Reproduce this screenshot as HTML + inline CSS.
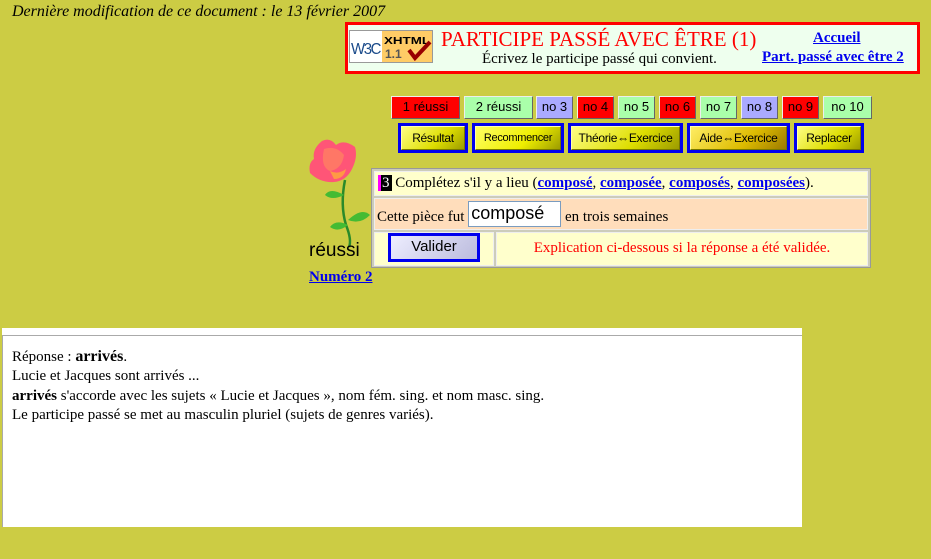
<!DOCTYPE html>
<html><head><meta charset="utf-8"><style>
*{margin:0;padding:0;box-sizing:border-box}
body{width:931px;height:559px;background:#cccc44;position:relative;overflow:hidden;font-family:"Liberation Serif",serif;color:#000}
.a{position:absolute}
a{color:#0000ee;font-weight:bold;text-decoration:underline}
.nb{position:absolute;top:96px;height:23px;font:13px "Liberation Sans",sans-serif;text-align:center;line-height:20px;border:1px solid;border-color:#eee #666 #666 #eee}
.r{background:#ff0000}.g{background:#aaffaa}.l{background:#aaaaff}
.ab{position:absolute;top:123px;height:30px;border:3px solid #0000ee;font:12px "Liberation Sans",sans-serif;text-align:center;line-height:22px;background:linear-gradient(135deg,#ffff88,#dddd00 60%,#999900);letter-spacing:-0.3px}
.ab span{display:block;height:24px;border:1px solid;border-color:#ffffaa #777700 #777700 #ffffaa}
</style></head><body>
<div class="a" style="left:12px;top:3px;font-style:italic;font-size:16px;white-space:nowrap">Dernière modification de ce document : le 13 février 2007</div>

<div class="a" style="left:345px;top:22px;width:575px;height:52px;border:3px solid #ff0000;background:#eeffee"></div>
<svg class="a" style="left:349px;top:30px" width="84" height="33" viewBox="0 0 84 33">
<rect x="0.5" y="0.5" width="83" height="32" fill="#fff" stroke="#999"/>
<rect x="33" y="1" width="50" height="31" fill="#fc6"/>
<text x="2" y="24" font-family="Liberation Sans" font-size="16" fill="#1a4a8a" letter-spacing="-1.5" textLength="29" lengthAdjust="spacingAndGlyphs">W3C</text>
<text x="35" y="14" font-family="Liberation Sans" font-weight="bold" font-size="10" textLength="46" lengthAdjust="spacingAndGlyphs">XHTML</text>
<text x="36" y="28" font-family="Liberation Sans" font-weight="bold" font-size="12" fill="#555">1.1</text>
<path d="M60 20 L66 28 L81 12" stroke="#900" stroke-width="4" fill="none"/>
</svg>
<div class="a" style="left:441px;top:27px;font-size:21px;color:#ff0000;white-space:nowrap">PARTICIPE PASSÉ AVEC ÊTRE (1)</div>
<div class="a" style="left:482px;top:51px;font-size:15px;white-space:nowrap">Écrivez le participe passé qui convient.</div>
<div class="a" style="left:813px;top:30px;font-size:15px"><a>Accueil</a></div>
<div class="a" style="left:762px;top:49px;font-size:15px;white-space:nowrap"><a>Part. passé avec être 2</a></div>

<div class="nb r" style="left:391px;width:69px">1 réussi</div>
<div class="nb g" style="left:464px;width:69px">2 réussi</div>
<div class="nb l" style="left:536px;width:37px">no 3</div>
<div class="nb r" style="left:577px;width:37px">no 4</div>
<div class="nb g" style="left:618px;width:37px">no 5</div>
<div class="nb r" style="left:659px;width:37px">no 6</div>
<div class="nb g" style="left:700px;width:37px">no 7</div>
<div class="nb l" style="left:741px;width:37px">no 8</div>
<div class="nb r" style="left:782px;width:37px">no 9</div>
<div class="nb g" style="left:823px;width:49px">no 10</div>

<div class="ab" style="left:398px;width:70px"><span>Résultat</span></div>
<div class="ab" style="left:472px;width:92px;background:linear-gradient(135deg,#ffff66,#eeee00 60%,#999900)"><span style="font-size:11px">Recommencer</span></div>
<div class="ab" style="left:568px;width:115px"><span>Théorie⇔Exercice</span></div>
<div class="ab" style="left:687px;width:103px;background:linear-gradient(135deg,#ffee66,#ddbb00 60%,#997700)"><span>Aide⇔Exercice</span></div>
<div class="ab" style="left:794px;width:70px"><span>Replacer</span></div>

<svg class="a" style="left:300px;top:135px" width="75" height="150" viewBox="0 0 75 150">
<path d="M45 45 Q40 70 46 90 Q52 105 49 112" stroke="#2a8a2a" stroke-width="2.5" fill="none"/>
<path d="M44 60 Q30 52 25 60 Q32 66 44 60Z" fill="#44bb33"/>
<path d="M48 85 Q62 72 70 80 Q60 90 48 85Z" fill="#44bb33"/>
<path d="M48 90 Q36 84 30 92 Q38 98 48 90Z" fill="#44bb33"/>
<path d="M22 6 Q30 2 36 10 Q44 4 55 12 Q58 22 52 34 Q46 46 34 47 Q20 48 10 38 Q8 28 14 24 Q12 14 22 6Z" fill="#ff5577"/>
<path d="M24 14 Q36 10 44 20 Q42 34 30 36 Q20 32 24 14Z" fill="#ff7766"/>
<path d="M30 36 Q38 40 46 34 Q44 44 34 44Z" fill="#ff9944"/>
</svg>
<div class="a" style="left:309px;top:240px;font:19px 'Liberation Sans',sans-serif">réussi</div>
<div class="a" style="left:309px;top:269px;font-size:15px"><a>Numéro 2</a></div>

<div class="a" style="left:371px;top:168px;width:500px;height:100px;background:#ccccbb;border:1px solid #999"></div>
<div class="a" style="left:374px;top:171px;width:494px;height:25px;background:#ffffcc;border:1px solid #eee;font-size:15px;line-height:23px;padding-left:3px;white-space:nowrap"><span style="background:#000;color:#fff;border-left:3px solid #f0f;padding:0 2px 0 1px">3</span> Complétez s'il y a lieu (<a>composé</a>, <a>composée</a>, <a>composés</a>, <a>composées</a>).</div>
<div class="a" style="left:374px;top:198px;width:494px;height:32px;background:#ffddbb;border:1px solid #eee;font-size:15px;line-height:36px;padding-left:2px;white-space:nowrap">Cette pièce fut <span style="display:inline-block;vertical-align:top;margin-top:2px;width:93px;height:26px;background:#fff;border:1px solid #7a9cc0;font:18px 'Liberation Sans',sans-serif;line-height:22px;padding-left:2px">composé</span> en trois semaines</div>
<div class="a" style="left:374px;top:232px;width:120px;height:34px;background:#ffffcc;border:1px solid #eee"></div>
<div class="a" style="left:388px;top:233px;width:92px;height:29px;border:3px solid #0000ee;background:linear-gradient(135deg,#eeeeff,#bbbbdd);font:15px 'Liberation Sans',sans-serif;text-align:center;line-height:22px">Valider</div>
<div class="a" style="left:496px;top:232px;width:372px;height:34px;background:#ffffcc;border:1px solid #eee;color:#ff0000;font-size:15px;text-align:center;line-height:30px;white-space:nowrap">Explication ci-dessous si la réponse a été validée.</div>

<div class="a" style="left:2px;top:328px;width:800px;height:199px;background:#fff"></div>
<div class="a" style="left:2px;top:335px;width:800px;height:1px;background:#aaa"></div>
<div class="a" style="left:2px;top:335px;width:1px;height:192px;background:#aaa"></div>
<div class="a" style="left:12px;top:347px;font-size:15px;line-height:19.3px;white-space:nowrap">Réponse : <b style="font-size:16px">arrivés</b>.<br>Lucie et Jacques sont arrivés ...<br><b>arrivés</b> s'accorde avec les sujets « Lucie et Jacques », nom fém. sing. et nom masc. sing.<br>Le participe passé se met au masculin pluriel (sujets de genres variés).</div>
</body></html>
